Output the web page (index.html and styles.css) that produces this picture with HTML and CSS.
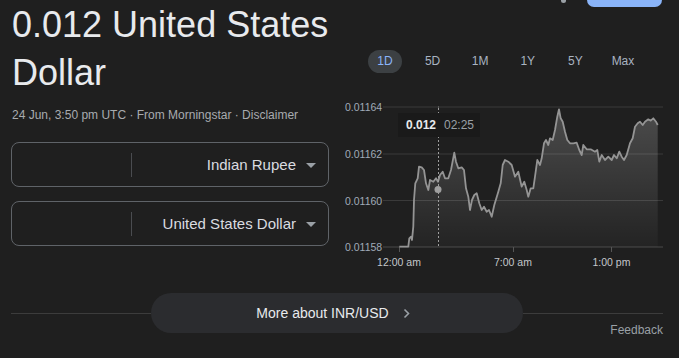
FILE: index.html
```html
<!DOCTYPE html>
<html lang="en">
<head>
  <meta charset="UTF-8" />
  <title>0.012 United States Dollar</title>
  <meta name="viewport" content="width=device-width, initial-scale=1.0"/>
  <link rel="stylesheet" href="styles.css">
</head>
<body>

  <div class="page">
    <div class="converter">
      <h1 class="result">0.012 United States Dollar</h1>
      <div class="meta">24 Jun, 3:50 pm UTC · From Morningstar · Disclaimer</div>

      <div class="select">
        <div class="amount"></div>
        <div class="name">Indian Rupee</div>
        <span class="caret"></span>
      </div>
      <div class="select second">
        <div class="amount"></div>
        <div class="name">United States Dollar</div>
        <span class="caret"></span>
      </div>
    </div>

    <div class="chart-col">
      <div class="topbar">
        <span class="dot"></span>
        <span class="blue-btn"></span>
      </div>

      <div class="tabs">
        <div class="tab active">1D</div>
        <div class="tab">5D</div>
        <div class="tab">1M</div>
        <div class="tab">1Y</div>
        <div class="tab">5Y</div>
        <div class="tab">Max</div>
      </div>

      <svg class="chart" width="323" height="180" viewBox="340 95 323 180">
        <defs>
          <linearGradient id="fill" x1="0" y1="0" x2="0" y2="1">
            <stop offset="0" stop-color="#ffffff" stop-opacity="0.2"/>
            <stop offset="1" stop-color="#ffffff" stop-opacity="0.02"/>
          </linearGradient>
        </defs>

        <!-- grid -->
        <g class="grid">
          <line x1="383" y1="107" x2="663" y2="107"/>
          <line x1="383" y1="154" x2="663" y2="154"/>
          <line x1="383" y1="200.5" x2="663" y2="200.5"/>
        </g>
        <line class="axis" x1="383" y1="247" x2="663" y2="247"/>
        <g class="ticks">
          <line x1="399.5" y1="247" x2="399.5" y2="252"/>
          <line x1="513.5" y1="247" x2="513.5" y2="252"/>
          <line x1="611.5" y1="247" x2="611.5" y2="252"/>
          <line x1="438.5" y1="106" x2="438.5" y2="109"/>
        </g>

        <g class="ylabels">
          <text x="345" y="111">0.01164</text>
          <text x="345" y="158">0.01162</text>
          <text x="345" y="204.5">0.01160</text>
          <text x="345" y="251">0.01158</text>
        </g>
        <g class="xlabels">
          <text x="399" y="266">12:00 am</text>
          <text x="513" y="266">7:00 am</text>
          <text x="611.5" y="266">1:00 pm</text>
        </g>

        <path class="area" d="M399.3,246.7 L408.3,246.7 L409.3,238.3 L411,236.7 L412,240 L413.3,226.7 L414,200 L415.3,183.3 L417.7,178.3 L419,166.7 L421.7,167.3 L424,170 L426,183.3 L428.3,190 L430,180 L433.3,181.7 L436,178.3 L438,181.7 L440,175 L442.7,171.7 L445,178.3 L448.3,178.3 L451,170 L454.3,152.7 L456,161.7 L458.3,168.3 L461.7,167.3 L464,170 L466,188.3 L468.3,196.7 L470,210 L472,200 L474.3,195 L476.7,193.3 L479.3,203.3 L481.7,210 L484,206.7 L486.7,211.7 L489,210 L491.7,216.7 L494.3,205 L498.3,191.7 L500.7,183.3 L502.7,165 L505,160 L508.3,161.7 L511.7,165 L515,176.7 L518.3,171.7 L521.7,186.7 L524.3,181.7 L526.7,190 L528.3,196.7 L530.7,188.3 L533.3,188.3 L535,176.7 L537.3,160 L540,165 L541.7,158.3 L544,143.3 L546,140 L548.3,145 L550,138.3 L552.7,140 L555,130 L557.3,116.7 L559,109.3 L560.7,118.3 L562.7,121.7 L565,131.7 L567.3,140 L570,143.3 L573.3,143.3 L576.7,142.7 L579.3,150 L581.7,155 L583.3,145 L586.7,149.3 L590.7,149.3 L595,151.7 L597.3,150 L599.3,161.7 L601.7,155 L605,160 L608.3,156.7 L611.7,160 L614,155 L616.7,158.3 L619.3,151.7 L621.7,156.7 L624,160 L626.7,155 L630,143.3 L632.7,138.3 L635,126.7 L637.7,123.3 L640,121.7 L642.7,125 L645,121.7 L648.3,119.3 L650.7,120.7 L653.3,118.3 L656,121.7 L657.7,125 L657.7,247 L399.3,247 Z"/>
        <path class="line" d="M399.3,246.7 L408.3,246.7 L409.3,238.3 L411,236.7 L412,240 L413.3,226.7 L414,200 L415.3,183.3 L417.7,178.3 L419,166.7 L421.7,167.3 L424,170 L426,183.3 L428.3,190 L430,180 L433.3,181.7 L436,178.3 L438,181.7 L440,175 L442.7,171.7 L445,178.3 L448.3,178.3 L451,170 L454.3,152.7 L456,161.7 L458.3,168.3 L461.7,167.3 L464,170 L466,188.3 L468.3,196.7 L470,210 L472,200 L474.3,195 L476.7,193.3 L479.3,203.3 L481.7,210 L484,206.7 L486.7,211.7 L489,210 L491.7,216.7 L494.3,205 L498.3,191.7 L500.7,183.3 L502.7,165 L505,160 L508.3,161.7 L511.7,165 L515,176.7 L518.3,171.7 L521.7,186.7 L524.3,181.7 L526.7,190 L528.3,196.7 L530.7,188.3 L533.3,188.3 L535,176.7 L537.3,160 L540,165 L541.7,158.3 L544,143.3 L546,140 L548.3,145 L550,138.3 L552.7,140 L555,130 L557.3,116.7 L559,109.3 L560.7,118.3 L562.7,121.7 L565,131.7 L567.3,140 L570,143.3 L573.3,143.3 L576.7,142.7 L579.3,150 L581.7,155 L583.3,145 L586.7,149.3 L590.7,149.3 L595,151.7 L597.3,150 L599.3,161.7 L601.7,155 L605,160 L608.3,156.7 L611.7,160 L614,155 L616.7,158.3 L619.3,151.7 L621.7,156.7 L624,160 L626.7,155 L630,143.3 L632.7,138.3 L635,126.7 L637.7,123.3 L640,121.7 L642.7,125 L645,121.7 L648.3,119.3 L650.7,120.7 L653.3,118.3 L656,121.7 L657.7,125"/>

        <!-- hover marker -->
        <line class="cursor" x1="438.5" y1="108" x2="438.5" y2="247"/>
        <circle class="marker" cx="438" cy="189.5" r="3.5"/>
        <rect class="tip" x="398" y="113" width="82" height="24"/>
        <text class="tip-value" x="406" y="129">0.012</text>
        <text class="tip-time" x="444" y="129">02:25</text>
      </svg>
    </div>
  </div>

  <div class="footer">
    <div class="more-row">
      <span class="rule"></span>
      <button class="more">
        More about INR/USD
        <svg width="7" height="11" viewBox="0 0 7 11"><path d="M1.5 1.5 L5.5 5.5 L1.5 9.5" fill="none" stroke="#9aa0a6" stroke-width="1.6"/></svg>
      </button>
      <span class="rule"></span>
    </div>
    <div class="feedback">Feedback</div>
  </div>

</body>
</html>
```

FILE: styles.css
```css
body {
  background: #1f1f1f;
  color: #e3e3e3;
  font-family: 'Liberation Sans', Arial, sans-serif;
  margin: 0;
  overflow: hidden;
}

.page {
  display: flex;
  gap: 11px;
  padding: 0 16px 0 11px;
}

/* left side */
.converter {
  width: 318px;
  flex: none;
}

.result {
  margin: 1px 0 0;
  padding-left: 1px;
  font-size: 36px;
  line-height: 48px;
  font-weight: normal;
  color: #e8eaed;
}

.meta {
  margin-top: 10px;
  padding-left: 1px;
  font-size: 12px;
  line-height: 16px;
  color: #a8abaf;
}

.select {
  display: flex;
  align-items: center;
  height: 43px;
  margin-top: 19px;
  border: 1px solid #5f6368;
  border-radius: 8px;
  font-size: 15px;
  color: #dadce0;
}

.select.second {
  margin-top: 14px;
}

.amount {
  width: 119px;
  height: 24px;
  border-right: 1px solid #4a4c50;
}

.name {
  flex: 1;
  text-align: right;
}

.caret {
  width: 0;
  height: 0;
  margin: 1px 12px 0 10px;
  border-left: 5px solid transparent;
  border-right: 5px solid transparent;
  border-top: 5px solid #9aa0a6;
}

/* right side */
.chart-col {
  width: 323px;
  flex: none;
}

.topbar {
  display: flex;
  justify-content: flex-end;
  align-items: flex-start;
  gap: 21px;
  height: 7px;
  overflow: hidden;
  padding-right: 1px;
}

.dot {
  width: 5px;
  height: 5px;
  margin-top: -2px;
  border-radius: 50%;
  background: #9aa0a6;
}

.blue-btn {
  width: 75px;
  height: 7px;
  border-radius: 0 0 8px 8px;
  background: #8ab4f8;
}

.tabs {
  display: flex;
  gap: 13.6px;
  margin-top: 43px;
  padding-left: 28px;
}

.tab {
  width: 34px;
  height: 23px;
  line-height: 23px;
  border-radius: 12px;
  text-align: center;
  font-size: 12px;
  color: #a9b3c1;
}

.tab.active {
  background: #3c4043;
  color: #8ab4f8;
}

.chart {
  display: block;
  margin-top: 22px;
}

.grid line {
  stroke: #3a3a3a;
  stroke-width: 1;
}

.axis {
  stroke: #3c3c3c;
  stroke-width: 1.5;
}

.ticks line {
  stroke: #555;
  stroke-width: 1;
}

.ylabels text {
  font-size: 10.5px;
  fill: #a0abb8;
}

.xlabels text {
  font-size: 10.5px;
  fill: #c4c7cb;
  text-anchor: middle;
}

.area {
  fill: url(#fill);
}

.line {
  fill: none;
  stroke: #949494;
  stroke-width: 1.8;
  stroke-linejoin: round;
}

.cursor {
  stroke: #9e9e9e;
  stroke-width: 1;
  stroke-dasharray: 2 2;
}

.marker {
  fill: #a0a0a0;
}

.tip {
  fill: #1a1a1a;
}

.tip-value {
  font-size: 12px;
  font-weight: bold;
  fill: #e8eaed;
}

.tip-time {
  font-size: 12px;
  fill: #9aa0a6;
}

/* bottom */
.footer {
  margin: 18px 16px 0 11px;
}

.more-row {
  display: flex;
  align-items: center;
}

.rule {
  flex: 1;
  height: 1px;
  background: #3c3c3c;
}

.more {
  display: flex;
  align-items: center;
  justify-content: center;
  gap: 14px;
  width: 372px;
  height: 40px;
  padding: 0 8px 0 0;
  border: none;
  border-radius: 20px;
  background: #2b2c2f;
  color: #e8eaed;
  font-family: 'Liberation Sans', Arial, sans-serif;
  font-size: 14px;
}

.feedback {
  margin-top: -10px;
  text-align: right;
  font-size: 12px;
  line-height: 14px;
  color: #9aa0a6;
}
```
